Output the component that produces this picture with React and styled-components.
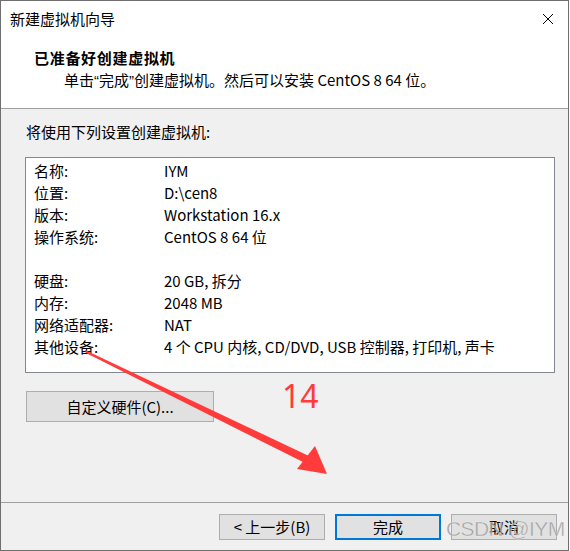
import React from 'react'
import styled, { createGlobalStyle } from 'styled-components'

const GlobalStyle = createGlobalStyle`
    html, body {
        margin: 0;
        padding: 0;
        background: #ffffff;
    }
    * {
        box-sizing: border-box;
    }
`;

const FONT = `"Noto Sans CJK SC", "Noto Sans", sans-serif`;

const Stage = styled.div`
    position: relative;
    width: 570px;
    height: 551px;
    font-family: ${FONT};
    font-size: 15px;
    color: #000;
`;

const Window = styled.div`
    width: 569px;
    height: 551px;
    border: 1px solid #6f6f6f;
    display: flex;
    flex-direction: column;
    background: #f0f0f0;
`;

const Header = styled.header`
    background: #fff;
    height: 108px;
    border-bottom: 1px solid #a0a0a0;
    display: flex;
    flex-direction: column;
`;

const TitleBar = styled.div`
    height: 35px;
    display: flex;
    align-items: center;
    justify-content: space-between;
    padding: 0 14px 0 9px;
    line-height: 20px;
`;

const CloseButton = styled.div`
    width: 12px;
    height: 12px;
    display: flex;
`;

const Heading = styled.h1`
    margin: 0;
    padding-left: 33px;
    margin-top: 11px;
    font-size: 15px;
    font-weight: bold;
    letter-spacing: 0.7px;
    line-height: 22px;
`;

const Subtitle = styled.p`
    margin: 0;
    padding-left: 63px;
    line-height: 22px;
`;

const Quote = styled.span`
    font-family: "Liberation Sans", sans-serif;
`;

const Body = styled.main`
    flex: 1;
    display: flex;
    flex-direction: column;
    padding: 13px 0 0 24px;
`;

const Intro = styled.p`
    margin: 0 0 0 1px;
    line-height: 20px;
`;

const SummaryBox = styled.div`
    margin-top: 15px;
    width: 530px;
    height: 216px;
    background: #fff;
    border: 1px solid #828790;
    padding: 2px 0 0 8px;
    display: grid;
    grid-template-columns: 130px 1fr;
    grid-auto-rows: 22px;
    align-content: start;
`;

const Cell = styled.div`
    line-height: 22px;
    white-space: nowrap;
`;

const Spacer = styled.div`
    grid-column: 1 / -1;
`;

const Button = styled.button`
    font-family: ${FONT};
    font-size: 15px;
    color: #000;
    background: #e1e1e1;
    border: ${({primary}) => primary ? '2px solid #0078d7' : '1px solid #adadad'};
    padding: 0;
    width: ${({wide}) => wide ? '188px' : '106px'};
    height: ${({wide}) => wide ? '31px' : '26px'};
    display: flex;
    align-items: center;
    justify-content: center;
    line-height: 20px;
`;

const CustomRow = styled.div`
    margin-top: 18px;
    margin-left: 1px;
    display: flex;
`;

const Footer = styled.footer`
    height: 48px;
    border-top: 1px solid #a0a0a0;
    display: flex;
    justify-content: flex-end;
    align-items: flex-start;
    gap: 10px;
    padding: 11px 11px 0 0;
`;

const Overlay = styled.svg`
    position: absolute;
    left: 0;
    top: 0;
    pointer-events: none;
`;

const StepNumber = styled.span`
    position: absolute;
    left: 282px;
    top: 376px;
    font-family: "Noto Sans", sans-serif;
    font-size: 32px;
    color: #ff3b3b;
    line-height: 40px;
`;

const Watermark = styled.span`
    position: absolute;
    left: 446px;
    top: 515px;
    font-family: "Liberation Sans", sans-serif;
    font-size: 21px;
    letter-spacing: -0.6px;
    white-space: nowrap;
    color: rgba(150, 150, 150, 0.8);
    -webkit-text-stroke: 0.4px rgba(255, 255, 255, 0.6);
    line-height: 28px;
    pointer-events: none;
`;

const rows = [
    ['名称:', 'IYM'],
    ['位置:', 'D:\\cen8'],
    ['版本:', 'Workstation 16.x'],
    ['操作系统:', 'CentOS 8 64 位'],
    null,
    ['硬盘:', '20 GB, 拆分'],
    ['内存:', '2048 MB'],
    ['网络适配器:', 'NAT'],
    ['其他设备:', '4 个 CPU 内核, CD/DVD, USB 控制器, 打印机, 声卡'],
];

const App = () => {
    return (
        <Stage>
            <GlobalStyle />
            <Window>
                <Header>
                    <TitleBar>
                        <span>新建虚拟机向导</span>
                        <CloseButton>
                            <svg width="12" height="12" viewBox="0 0 12 12">
                                <path d="M1 1 L11 11 M11 1 L1 11" stroke="#000" strokeWidth="1" />
                            </svg>
                        </CloseButton>
                    </TitleBar>
                    <Heading>已准备好创建虚拟机</Heading>
                    <Subtitle>单击<Quote>“</Quote>完成<Quote>”</Quote>创建虚拟机。然后可以安装 CentOS 8 64 位。</Subtitle>
                </Header>
                <Body>
                    <Intro>将使用下列设置创建虚拟机:</Intro>
                    <SummaryBox>
                        {rows.map((row, i) => row ? (
                            <React.Fragment key={i}>
                                <Cell>{row[0]}</Cell>
                                <Cell>{row[1]}</Cell>
                            </React.Fragment>
                        ) : <Spacer key={i} />)}
                    </SummaryBox>
                    <CustomRow>
                        <Button wide>自定义硬件(C)...</Button>
                    </CustomRow>
                </Body>
                <Footer>
                    <Button>&lt; 上一步(B)</Button>
                    <Button primary>完成</Button>
                    <Button>取消</Button>
                </Footer>
            </Window>
            <Overlay width="570" height="551" viewBox="0 0 570 551">
                <polygon points="85,350 86,353 307,464 311,457" fill="#ff3b3b" />
                <polygon points="327,474 297,469 315,446" fill="#ff3b3b" />
            </Overlay>
            <StepNumber>14</StepNumber>
            <Watermark>CSDN @IYM</Watermark>
        </Stage>
    );
}

export default App;
